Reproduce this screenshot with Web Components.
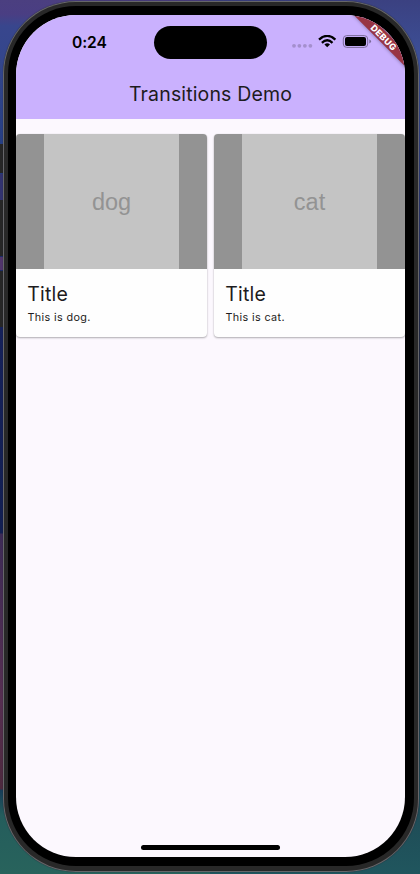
<!DOCTYPE html>
<html lang="en">
<head>
<meta charset="utf-8">
<title>Transitions Demo</title>
<style>
html,body{margin:0;height:100%;overflow:hidden}
body{font-family:Inter,"Liberation Sans",sans-serif;color:#1d1b20}
</style>
</head>
<body>
<desktop-backdrop>
  <phone-frame>
    <status-bar time="0:24"></status-bar>
    <app-bar>Transitions Demo</app-bar>
    <card-row>
      <media-card label="dog"><span slot="title">Title</span>This is dog.</media-card>
      <media-card label="cat"><span slot="title">Title</span>This is cat.</media-card>
    </card-row>
    <home-indicator></home-indicator>
    <debug-banner slot="overlay">DEBUG</debug-banner>
  </phone-frame>
</desktop-backdrop>
<script>
function define(name, html) {
  const template = document.createElement('template');
  template.innerHTML = html;
  customElements.define(name, class extends HTMLElement {
    constructor() {
      super();
      this.attachShadow({ mode: 'open' }).append(template.content.cloneNode(true));
    }
    connectedCallback() {
      for (const el of this.shadowRoot.querySelectorAll('[data-attr]'))
        el.textContent = this.getAttribute(el.dataset.attr);
    }
  });
}

define('desktop-backdrop', `
<style>
:host{display:block;box-sizing:border-box;width:420px;height:874px;padding:1px 1px 2px 3px;
  background:
    linear-gradient(#262626,#262626) 0 144px/3px 29px no-repeat,
    linear-gradient(#32336f,#32336f) 0 174px/3px 26px no-repeat,
    linear-gradient(#262626,#262626) 0 200px/3px 56px no-repeat,
    linear-gradient(#51356b,#51356b) 0 257px/3px 13px no-repeat,
    linear-gradient(#262626,#262626) 0 271px/3px 56px no-repeat,
    linear-gradient(#4b3f80 0,#4a3e83 14px,#38468d 26px,#34468c 60px,#263f83 144px,#15215a 327px,#121f52 533px,#3d2b56 534px,#562f51 700px,#4d2a3e 789px,#173c58 790px,#245d5c 815px,#28635c 874px) 0 0/210px 100% no-repeat,
    linear-gradient(#3b4181,#3c5098 60px,#29356d 200px,#1c2230 400px,#1e4350 760px,#20565e) 210px 0/210px 100% no-repeat}
</style><slot></slot>`);

define('phone-frame', `
<style>
:host{display:block;box-sizing:border-box;height:100%;padding:1px;border-radius:73px;background:#666669;box-shadow:0 0 1px #171a2a}
.metal{box-sizing:border-box;height:100%;padding:4px 4px 5px;border-radius:72px;background:#282828}
.bezel{box-sizing:border-box;height:100%;padding:9px 9px 9px 8px;border-radius:68px;background:#000}
.screen{position:relative;box-sizing:border-box;height:100%;display:flex;flex-direction:column;overflow:hidden;border-radius:60px;background:#fcf8fe}
</style>
<div class="metal"><div class="bezel"><div class="screen"><slot></slot><slot name="overlay"></slot></div></div></div>`);

define('status-bar', `
<style>
:host{display:grid;grid-template-columns:138px 113px 138px;height:54px;background:#cab1fe;color:#000}
.time{padding:19px 0 0 56px;font-weight:600;font-size:15.6px;line-height:17px;letter-spacing:-.1px}
.island{height:33px;margin-top:11px;border-radius:17px;background:#000}
.icons{display:flex;align-items:flex-start;padding:20px 0 0 23.5px}
svg{display:block}
</style>
<div class="time" data-attr="time"></div>
<div class="island"></div>
<div class="icons">
<svg width="82" height="15" viewBox="0 0 82 15">
  <g fill="#a48fcd"><circle cx="3" cy="10.8" r="1.9"/><circle cx="8.4" cy="10.8" r="1.9"/><circle cx="13.9" cy="10.8" r="1.9"/><circle cx="19.4" cy="10.8" r="1.9"/></g>
  <g fill="none" stroke="#000" stroke-width="2.3"><path d="M28 4.7Q36.2-2.9 44.4 4.7"/><path d="M30.9 7.8Q36.2 2.7 41.5 7.8"/></g>
  <path d="M36.2 12.3L33.4 9.5Q36.2 6.9 39 9.5Z"/>
  <rect x="52.3" y="0.6" width="24.4" height="11.8" rx="3.4" fill="none" stroke="#7a6a99"/>
  <rect x="54" y="2.1" width="21" height="8.8" rx="2"/>
  <path d="M78.3 4.6Q80.1 5.2 80.1 6.5T78.3 8.4Z" fill="#7a6a99"/>
</svg>
</div>`);

define('app-bar', `
<style>
:host{display:flex;align-items:center;justify-content:center;height:50px;box-sizing:border-box;background:#cab1fe;font-size:19.5px;letter-spacing:.15px}
</style><slot></slot>`);

define('card-row', `
<style>
:host{display:grid;grid-template-columns:191px 191px;justify-content:space-between;padding-top:15px}
</style><slot></slot>`);

define('media-card', `
<style>
:host{display:block;height:203px;border-radius:4px;background:#fefefe;box-shadow:0 1px 2px #0000004d,0 0 1px #00000022}
.media{display:flex;justify-content:center;height:135px;border-radius:4px 4px 0 0;background:#939393}
.picture{display:grid;place-items:center;box-sizing:border-box;padding-top:2px;width:135px;background:#c4c4c4;color:#939393;font:23.5px/27px "Liberation Sans",sans-serif}
.title{padding:13px 0 0 11.2px;font-size:19.5px;line-height:24px;letter-spacing:.2px}
.text{padding:5px 0 0 11.5px;font-size:10.8px;line-height:14px;letter-spacing:.36px}
</style>
<div class="media"><div class="picture" data-attr="label"></div></div>
<div class="title"><slot name="title"></slot></div>
<div class="text"><slot></slot></div>`);

define('home-indicator', `
<style>
:host{display:block;width:139px;height:5px;margin:auto auto 7px;border-radius:3px;background:#000}
</style>`);

define('debug-banner', `
<style>
:host{position:absolute;left:327.5px;top:16.5px;width:80px;height:11px;transform:rotate(45deg);background:#983444;box-shadow:0 0 4px #0006;color:#fff;font:800 8.8px/11px Inter,sans-serif;letter-spacing:.4px;text-align:center}
</style><slot></slot>`);
</script>
</body>
</html>
